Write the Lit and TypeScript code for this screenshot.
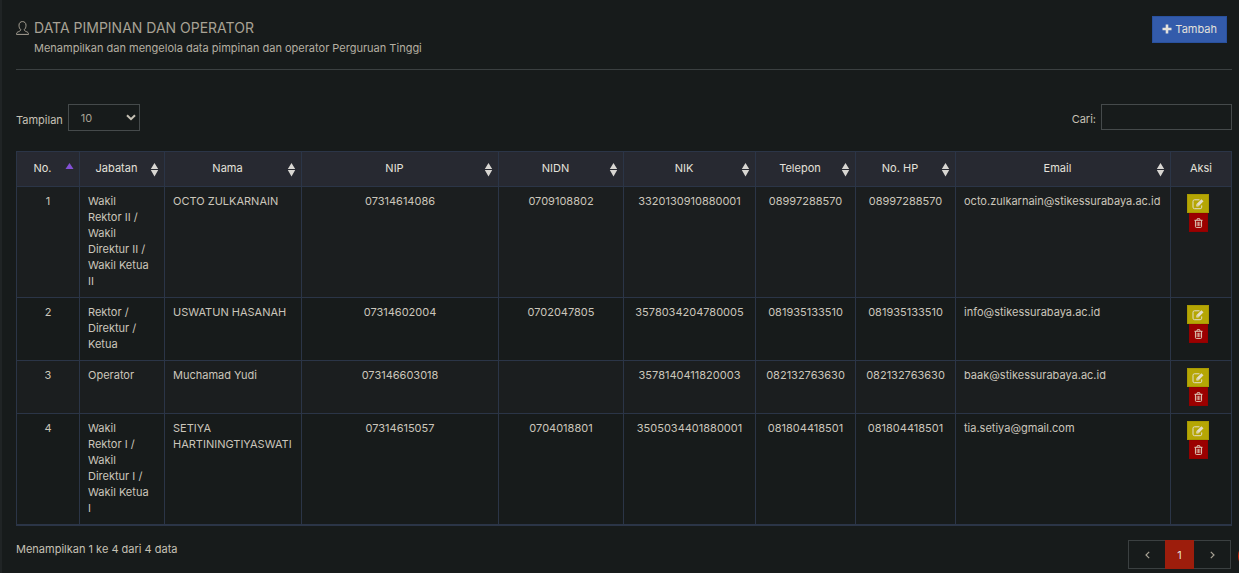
import { LitElement, html, css, svg } from "lit";
import { customElement, property, state } from "lit/decorators.js";

interface Person {
  no: number;
  jabatan: string;
  nama: string;
  nip: string;
  nidn: string;
  nik: string;
  telepon: string;
  hp: string;
  email: string;
}

const PEOPLE: Person[] = [
  { no: 1, jabatan: "Wakil Rektor II / Wakil Direktur II / Wakil Ketua II", nama: "OCTO ZULKARNAIN", nip: "07314614086", nidn: "0709108802", nik: "3320130910880001", telepon: "08997288570", hp: "08997288570", email: "octo.zulkarnain@stikessurabaya.ac.id" },
  { no: 2, jabatan: "Rektor / Direktur / Ketua", nama: "USWATUN HASANAH", nip: "07314602004", nidn: "0702047805", nik: "3578034204780005", telepon: "081935133510", hp: "081935133510", email: "info@stikessurabaya.ac.id" },
  { no: 3, jabatan: "Operator", nama: "Muchamad Yudi", nip: "073146603018", nidn: "", nik: "3578140411820003", telepon: "082132763630", hp: "082132763630", email: "baak@stikessurabaya.ac.id" },
  { no: 4, jabatan: "Wakil Rektor I / Wakil Direktur I / Wakil Ketua I", nama: "SETIYA HARTININGTIYASWATI", nip: "07314615057", nidn: "0704018801", nik: "3505034401880001", telepon: "081804418501", hp: "081804418501", email: "tia.setiya@gmail.com" },
];

const COLUMNS = [
  { key: "no", label: "No." },
  { key: "jabatan", label: "Jabatan" },
  { key: "nama", label: "Nama" },
  { key: "nip", label: "NIP" },
  { key: "nidn", label: "NIDN" },
  { key: "nik", label: "NIK" },
  { key: "telepon", label: "Telepon" },
  { key: "hp", label: "No. HP" },
  { key: "email", label: "Email" },
];

const LEFT_ALIGNED = ["jabatan", "nama", "email"];

@customElement("people-table")
export class PeopleTable extends LitElement {
  @property({ attribute: false }) rows: Person[] = [];

  static styles = css`
    :host { display: block; }
    table {
      width: 100%;
      table-layout: fixed;
      border-collapse: collapse;
      border-bottom: 2px solid #2b3547;
      line-height: 16px;
    }
    th, td { box-sizing: border-box; border: 1px solid #2b3547; vertical-align: top; }
    .no { width: 63px; }
    .jabatan { width: 85px; }
    .nama { width: 137px; }
    .nidn { width: 125px; }
    .nik { width: 132px; }
    .telepon, .hp { width: 100px; }
    .email { width: 215px; }
    .aksi { width: 61px; }
    th {
      padding: 8px 8px 10px;
      background: #272931;
      color: #e4e1db;
      font-weight: 400;
    }
    th.sortable { padding-right: 4px; }
    .head { display: flex; align-items: center; gap: 4px; }
    .head-label { flex: 1; text-align: center; }
    .sort {
      display: block;
      width: 11px;
      height: 16px;
      padding: 0;
      border: 0;
      background: none;
      color: #d8d6d2;
      cursor: pointer;
    }
    .sort.active { color: #8350d6; }
    .sort svg { display: block; overflow: visible; }
    td { padding: 6px 8px 8px; color: #cbc6bb; text-align: center; }
    td.left { text-align: left; }
    td.jabatan { padding-right: 13px; }
    td.aksi { padding: 7px 8px; }
    tbody tr:nth-child(odd) { background: #1b1e1f; }
    .actions { display: flex; flex-direction: column; align-items: center; margin-right: 6px; }
    .act {
      display: grid;
      place-items: center;
      height: 19px;
      padding: 0;
      border: 1px solid;
      color: #e3ddc9;
      cursor: pointer;
    }
    .edit { width: 22px; background: #b5a604; border-color: #a89a02; }
    .trash { width: 19px; background: #9b0000; border-color: #930000; }
  `;

  private sortIcon(active: boolean) {
    return html`<svg width="11" height="16" viewBox="0 0 11 16" fill="currentColor" aria-hidden="true">
      ${active
        ? svg`<path d="M1.500 9 5.500 3l4 6z" />`
        : svg`<path d="M1.800 9 5.500 3l3.700 6zM1.800 10h7.400L5.500 16.500z" />`}
    </svg>`;
  }

  render() {
    return html`
      <table>
        <thead>
          <tr>
            ${COLUMNS.map(
              (c, i) => html`<th scope="col" class="sortable ${c.key}">
                <div class="head">
                  <span class="head-label">${c.label}</span>
                  <button class="sort ${i === 0 ? "active" : ""}" aria-label="Urutkan ${c.label}">${this.sortIcon(i === 0)}</button>
                </div>
              </th>`
            )}
            <th scope="col" class="aksi">Aksi</th>
          </tr>
        </thead>
        <tbody>
          ${this.rows.map(
            (r) => html`<tr>
              ${COLUMNS.map(
                (c) => html`<td class="${c.key} ${LEFT_ALIGNED.includes(c.key) ? "left" : ""}">${r[c.key as keyof Person]}</td>`
              )}
              <td class="aksi">
                <div class="actions">
                  <button class="act edit" aria-label="Ubah ${r.nama}">
                    <svg width="12" height="12" viewBox="0 0 12 12" fill="none" stroke="currentColor" aria-hidden="true">
                      <path d="M7.500 1.800H2.500Q1 1.800 1 3.300v5.900q0 1.500 1.500 1.500h5.700q1.500 0 1.500-1.500V7.400" />
                      <path d="M4.300 8.400V6.300L9.400 1.200l2.100 2.100-5.100 5.100z" fill="currentColor" stroke="none" />
                      <path d="m5 6.500 1.300 1.300" stroke="#b5a604" stroke-width=".6" />
                    </svg>
                  </button>
                  <button class="act trash" aria-label="Hapus ${r.nama}">
                    <svg width="9" height="10" viewBox="0 0 10 11" fill="none" stroke="currentColor" aria-hidden="true">
                      <path d="M.5 2.500h9M3.200 2.300l.5-1.600h2.600l.5 1.600M1.600 2.500v6.900q0 1 1 1h4.800q1 0 1-1V2.500" />
                      <path d="M3.500 4.200v4.600M5 4.200v4.600M6.500 4.200v4.600" stroke-width=".8" />
                    </svg>
                  </button>
                </div>
              </td>
            </tr>`
          )}
        </tbody>
      </table>
    `;
  }
}

@customElement("app-root")
export class AppRoot extends LitElement {
  @state() private query = "";

  static styles = css`
    :host {
      display: block;
      position: relative;
      box-sizing: border-box;
      min-height: 100vh;
      padding: 16px 7px 4px 14px;
      border-left: 2px solid #202425;
      background: #171b1b;
      color: #c6c1b5;
      font: 11px/16px Inter, Roboto, sans-serif;
      overflow: hidden;
    }
    button, input, select { font: inherit; border-radius: 0; }
    .header {
      display: flex;
      justify-content: space-between;
      align-items: flex-start;
      padding: 0 5px 13px 0;
      margin-bottom: 34px;
      border-bottom: 1px solid #3b4041;
    }
    .heading { display: grid; grid-template-columns: 13px 1fr; column-gap: 5px; row-gap: 2px; padding-top: 2px; }
    .heading svg { align-self: center; }
    h1 { margin: 0; font-size: 14px; line-height: 20px; font-weight: 400; color: #a8a295; }
    .subtitle { grid-column: 2; margin: 0; color: #b5afa2; }
    .add {
      display: flex;
      align-items: center;
      gap: 3px;
      padding: 0 9px 2px;
      height: 27px;
      border: 1px solid #29519e;
      background: #335bab;
      color: #e4e1db;
      cursor: pointer;
    }
    .toolbar { display: flex; justify-content: space-between; align-items: flex-start; margin-bottom: 20px; }
    .field { display: flex; align-items: center; gap: 5px; }
    .field label { padding-top: 4px; }
    .select-box { display: grid; align-items: center; }
    .select-box > * { grid-area: 1 / 1; }
    .select-box svg { justify-self: end; margin-right: 4px; pointer-events: none; }
    select {
      appearance: none;
      box-sizing: border-box;
      width: 72px;
      height: 27px;
      padding: 0 12px;
      border: 1px solid #454a4b;
      background: #171b1b;
      color: #a8a295;
    }
    .search {
      box-sizing: border-box;
      width: 131px;
      height: 26px;
      padding: 0 8px;
      border: 1px solid #454a4b;
      background: #171b1b;
      color: #cbc6bb;
    }
    .footer { display: flex; justify-content: space-between; align-items: flex-start; margin-top: 14px; }
    .info { padding-top: 1px; }
    .pager { display: flex; margin-right: 1px; border: 1px solid #3b4041; }
    .page {
      display: grid;
      place-items: center;
      width: 36px;
      height: 27px;
      padding: 0;
      border: 0;
      background: none;
      color: #a8a295;
      cursor: pointer;
    }
    .page.current { width: 29px; height: 29px; margin: -1px 0; background: #9d1d0c; color: #e4e1db; }
    .bubble {
      position: absolute;
      right: -27px;
      bottom: 3px;
      width: 28px;
      height: 28px;
      border-radius: 50%;
      background: #c41f06;
    }
  `;

  render() {
    return html`
      <header class="header">
        <div class="heading">
          <svg width="13" height="14" viewBox="0 0 13 14" fill="none" stroke="#a8a295" aria-hidden="true">
            <path d="M4.800 8.700C3.500 7.700 3 6 3 4.200 3 1.800 4.600.6 6.500.6S10 1.800 10 4.200c0 1.800-.5 3.500-1.800 4.500.2 1 .8 1.400 2.100 1.900 1.500.5 2.200 1.100 2.200 2.800H.5c0-1.700.7-2.300 2.200-2.800 1.300-.5 1.900-.9 2.100-1.900z" />
          </svg>
          <h1>DATA PIMPINAN DAN OPERATOR</h1>
          <p class="subtitle">Menampilkan dan mengelola data pimpinan dan operator Perguruan Tinggi</p>
        </div>
        <button class="add">
          <svg width="10" height="10" viewBox="0 0 10 10" fill="currentColor" aria-hidden="true">
            <path d="M3.700.5h2.600v3.200h3.200v2.600H6.300v3.200H3.700V6.300H.5V3.700h3.200z" />
          </svg>
          Tambah
        </button>
      </header>

      <div class="toolbar">
        <div class="field">
          <label for="size">Tampilan</label>
          <div class="select-box">
            <select id="size">
              <option>10</option>
              <option>25</option>
              <option>50</option>
              <option>100</option>
            </select>
            <svg width="10" height="7" viewBox="0 0 10 7" fill="none" stroke="#c6c1b5" stroke-width="2" aria-hidden="true">
              <path d="m1 1.200 4 4 4-4" />
            </svg>
          </div>
        </div>
        <div class="field">
          <label for="search">Cari:</label>
          <input
            class="search"
            id="search"
            type="search"
            .value=${this.query}
            @input=${(e: Event) => (this.query = (e.target as HTMLInputElement).value)}
          />
        </div>
      </div>

      <people-table
        .rows=${PEOPLE.filter((p) => Object.values(p).join(" ").toLowerCase().includes(this.query.toLowerCase()))}
      ></people-table>

      <footer class="footer">
        <div class="info">Menampilkan 1 ke 4 dari 4 data</div>
        <nav class="pager" aria-label="Halaman">
          <button class="page" aria-label="Sebelumnya">
            <svg width="5" height="8" viewBox="0 0 5 8" fill="none" stroke="currentColor" stroke-width="1.200"><path d="M4.200.8 1 4l3.200 3.200" /></svg>
          </button>
          <button class="page current" aria-current="page">1</button>
          <button class="page" aria-label="Berikutnya">
            <svg width="5" height="8" viewBox="0 0 5 8" fill="none" stroke="currentColor" stroke-width="1.200"><path d="M.8.800 4 4 .8 7.200" /></svg>
          </button>
        </nav>
      </footer>
      <div class="bubble"></div>
    `;
  }
}
